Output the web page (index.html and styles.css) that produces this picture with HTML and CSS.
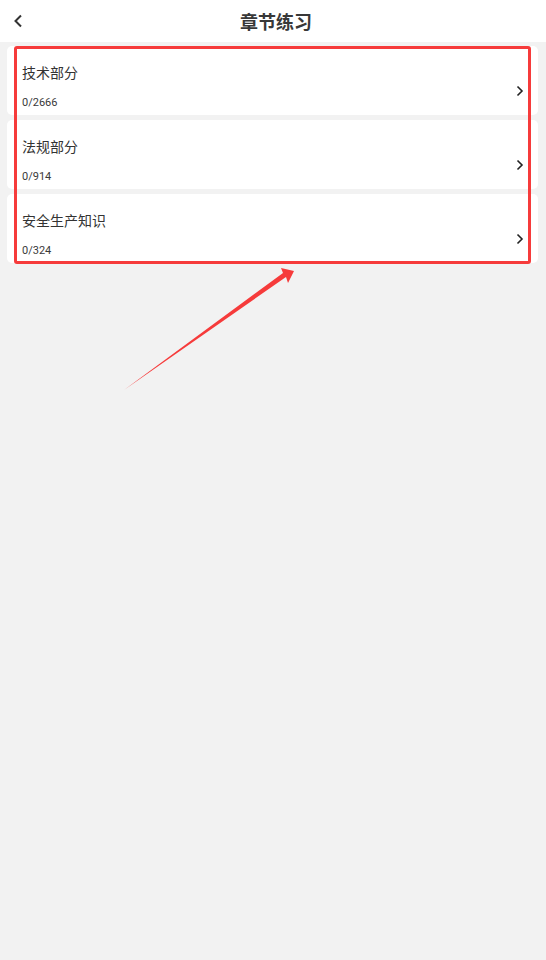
FILE: index.html
```html
<!DOCTYPE html>
<html lang="zh-CN">
<head>
    <meta charset="UTF-8">
    <meta name="viewport" content="width=device-width, initial-scale=1.0">
    <title>章节练习</title>
    <link rel="stylesheet" href="styles.css">
</head>
<body>
    <header class="topbar">
        <span class="back">
            <svg width="10" height="14" viewBox="0 0 10 14"><path d="M8 1.5 L2.5 7 L8 12.5" fill="none" stroke="#333" stroke-width="2"/></svg>
        </span>
        <h1>章节练习</h1>
    </header>
    <div class="list">
        <div class="item">
            <div class="info">
                <div class="name">技术部分</div>
                <div class="count">0/2666</div>
            </div>
            <svg class="arrow" width="8" height="12" viewBox="0 0 8 12"><path d="M1.5 1.5 L6 6 L1.5 10.5" fill="none" stroke="#222" stroke-width="1.6"/></svg>
        </div>
        <div class="item">
            <div class="info">
                <div class="name">法规部分</div>
                <div class="count">0/914</div>
            </div>
            <svg class="arrow" width="8" height="12" viewBox="0 0 8 12"><path d="M1.5 1.5 L6 6 L1.5 10.5" fill="none" stroke="#222" stroke-width="1.6"/></svg>
        </div>
        <div class="item">
            <div class="info">
                <div class="name">安全生产知识</div>
                <div class="count">0/324</div>
            </div>
            <svg class="arrow" width="8" height="12" viewBox="0 0 8 12"><path d="M1.5 1.5 L6 6 L1.5 10.5" fill="none" stroke="#222" stroke-width="1.6"/></svg>
        </div>
    </div>
    <!-- annotation overlay -->
    <div class="mark-box"></div>
    <svg class="mark-arrow" width="546" height="400" viewBox="0 0 546 400">
        <polygon points="124,390 283,273 281,268 294,271 288,283 286,277" fill="#f63b3b"/>
    </svg>
</body>
</html>
```

FILE: styles.css
```css
body {
    margin: 0;
    padding: 0;
    background-color: #f2f2f2;
    font-family: "Noto Sans CJK SC", "Noto Sans", sans-serif;
    color: #333;
    min-height: 960px;
    position: relative;
}
.topbar {
    height: 42px;
    background-color: #fff;
    display: flex;
    align-items: center;
    justify-content: center;
    position: relative;
}
.topbar h1 {
    margin: 0;
    padding-left: 6px;
    font-size: 18px;
    font-weight: bold;
    color: #383838;
}
.back {
    position: absolute;
    left: 13px;
    top: 14px;
    display: flex;
}
.list {
    padding: 4px 8px 0 7px;
    display: flex;
    flex-direction: column;
    gap: 5px;
}
.item {
    background-color: #fff;
    border-radius: 5px;
    height: 69px;
    display: flex;
    align-items: flex-start;
    justify-content: space-between;
    padding: 0 14px 0 15px;
    box-sizing: border-box;
}
.name {
    font-size: 14px;
    line-height: 20px;
    margin-top: 16px;
}
.count {
    font-size: 11px;
    line-height: 14px;
    margin-top: 14px;
    color: #3a3a3a;
    font-family: "Roboto", "Noto Sans", sans-serif;
}
.arrow {
    margin-top: 39px;
}
.mark-box {
    position: absolute;
    left: 14px;
    top: 46px;
    width: 511px;
    height: 212px;
    border: 3px solid #f63b3b;
    border-radius: 3px;
}
.mark-arrow {
    position: absolute;
    left: 0;
    top: 0;
}
```
